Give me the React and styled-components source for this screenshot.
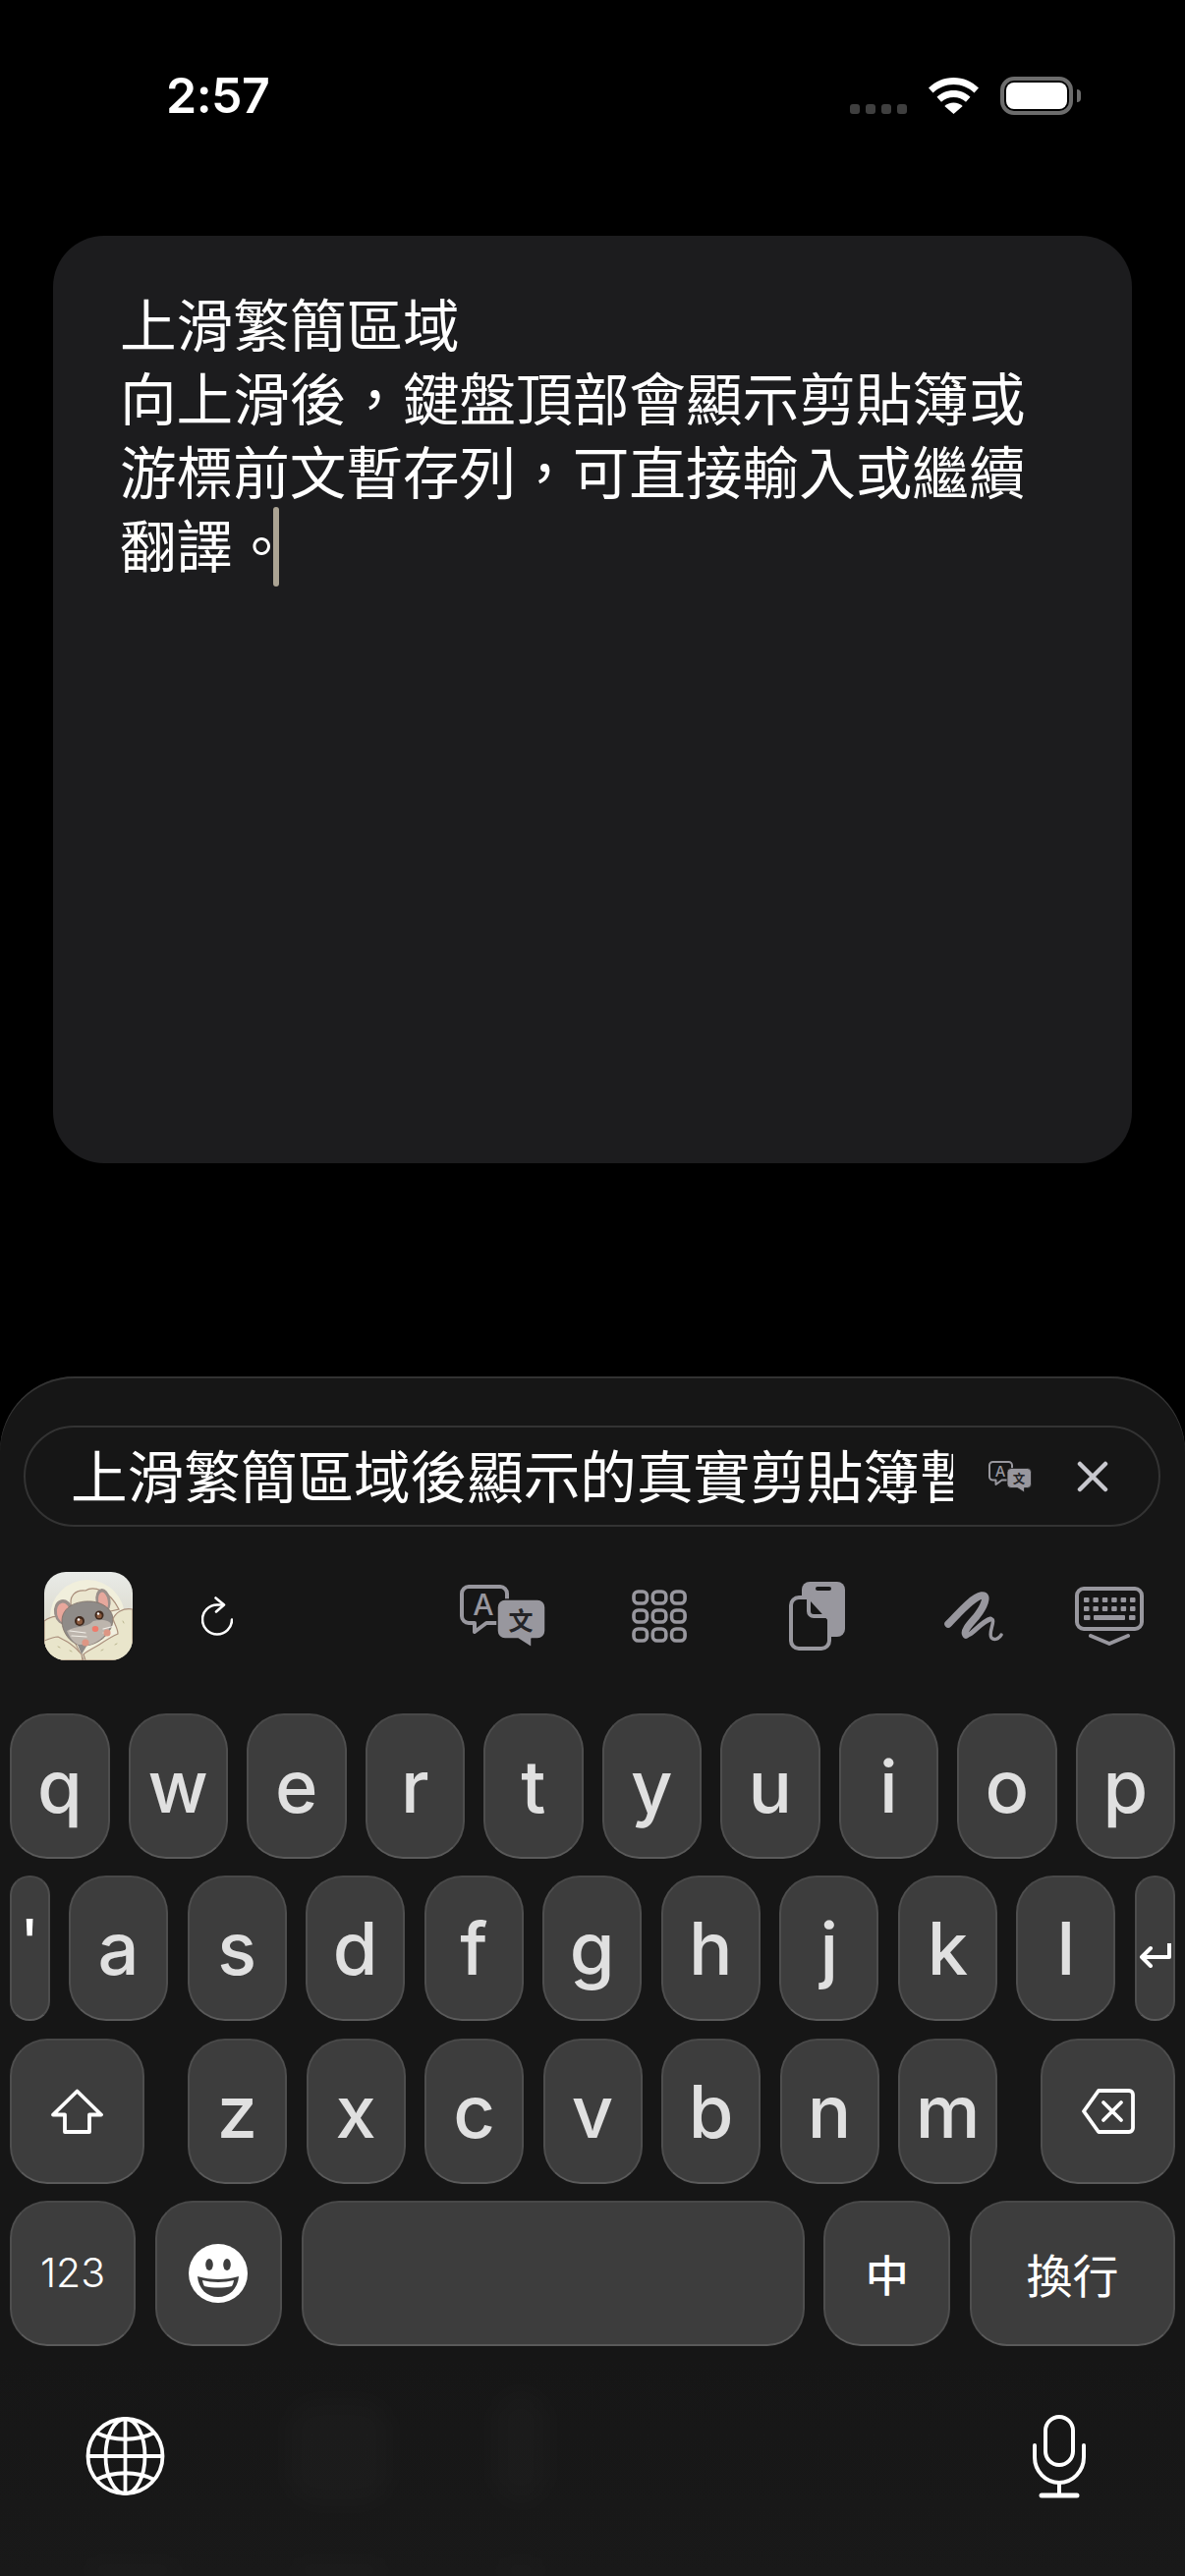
import React from "react";
import styled, { createGlobalStyle } from "styled-components";

const CJK = `"Noto Sans CJK TC", "Noto Sans CJK SC", sans-serif`;
const LATIN = `Inter, "Noto Sans CJK TC", sans-serif`;
const ICON = "#98979e";
const PANEL = "#161616";

const GlobalStyle = createGlobalStyle`
  html, body {
    margin: 0;
    padding: 0;
    background: #000;
  }
  * {
    box-sizing: border-box;
  }
`;

const Page = styled.div`
  width: 1206px;
  height: 2622px;
  background: #000;
  display: flex;
  flex-direction: column;
  overflow: hidden;
`;

const StatusBar = styled.div`
  height: 117px;
  padding: 78px 114px 0 169px;
  display: flex;
  justify-content: space-between;
  align-items: center;
`;

const Clock = styled.div`
  font-family: ${LATIN};
  font-weight: 600;
  font-size: 50px;
  line-height: 39px;
  letter-spacing: -0.5px;
  color: #fff;
`;

const StatusIcons = styled.div`
  display: flex;
  align-items: center;
  gap: 22px;
`;

const Dots = styled.div`
  display: flex;
  gap: 6px;
  align-self: flex-end;
  margin-bottom: 1px;
`;

const Dot = styled.span`
  width: 10px;
  height: 10px;
  border-radius: 3px;
  background: #3f3f3f;
`;

const Battery = styled.div`
  position: relative;
  width: 74px;
  height: 39px;
  border: 4px solid #6c6c6c;
  border-radius: 14px;
  padding: 2px;
  &::after {
    content: "";
    position: absolute;
    right: -12px;
    top: 9px;
    width: 4px;
    height: 13px;
    background: #6c6c6c;
    border-radius: 0 6px 6px 0;
  }
`;

const BatteryFill = styled.div`
  width: 100%;
  height: 100%;
  background: #fff;
  border-radius: 8px;
`;

const NoteCard = styled.div`
  margin: 123px 54px 0;
  height: 944px;
  padding: 51px 68px;
  background: #1c1c1e;
  border-radius: 52px;
  font-family: ${CJK};
  font-size: 57.6px;
  line-height: 75px;
  color: #fff;
`;

const Caret = styled.span`
  display: inline-block;
  width: 6px;
  height: 81px;
  margin: -14px 0 -2px -17px;
  vertical-align: middle;
  background: #aba393;
  border-radius: 3px;
`;

const KeyboardPanel = styled.div`
  position: relative;
  margin-top: 217px;
  flex: 1;
  background: linear-gradient(180deg, ${PANEL} 0%, ${PANEL} 82%, #191919 100%);
  border-radius: 76px 76px 0 0;
  box-shadow: inset 0 2px 0 #333;
  padding-top: 50px;
  overflow: hidden;
`;

const CandidatePill = styled.div`
  margin: 0 25px 0 24px;
  height: 103px;
  border: 2px solid #333;
  border-radius: 52px;
  display: flex;
  align-items: center;
  padding-left: 46px;
`;

const CandidateText = styled.div`
  width: 898px;
  margin-bottom: 5px;
  overflow: hidden;
  white-space: nowrap;
  font-family: ${CJK};
  font-size: 57.6px;
  line-height: 70px;
  color: #fff;
`;

const PillAction = styled.div`
  display: flex;
  align-items: center;
  margin-left: ${(p) => p.$gap}px;
`;

const Toolbar = styled.div`
  height: 190px;
  padding: 46px 0 54px 45px;
  display: flex;
  align-items: center;
`;

const ToolSlot = styled.div`
  display: flex;
  align-items: center;
  margin-left: ${(p) => p.$gap || 0}px;
`;

const AppIcon = styled.div`
  width: 90px;
  height: 90px;
  border-radius: 22px;
  overflow: hidden;
`;

const Keys = styled.div`
  padding: 0 10px;
  display: flex;
  flex-direction: column;
  gap: 17.3px;
`;

const KeyRow = styled.div`
  display: flex;
  justify-content: space-between;
`;

const KeyGroup = styled.div`
  display: flex;
  gap: 19.5px;
`;

const Key = styled.div`
  flex: none;
  width: ${(p) => p.$width}px;
  height: 148px;
  display: flex;
  align-items: center;
  justify-content: center;
  padding-top: ${(p) => p.$shift || 0}px;
  padding-bottom: ${(p) => p.$lift || 0}px;
  background: #3d3d3d;
  border: 2px solid #4e4e4e;
  border-top-color: #484848;
  border-bottom-color: #5a5a5a;
  border-radius: ${(p) => p.$radius || 38}px;
  font-family: ${(p) => (p.$cjk ? CJK : LATIN)};
  font-size: ${(p) => p.$size || 74}px;
  font-weight: ${(p) => p.$weight || 500};
  line-height: 1;
  color: ${(p) => p.$color || "#e0e0e0"};
`;

const SystemRow = styled.div`
  margin-top: 70px;
  padding: 0 100px 0 87px;
  display: flex;
  justify-content: space-between;
  align-items: center;
`;

const Ghost = styled.div`
  position: absolute;
  left: ${(p) => p.$left}px;
  top: ${(p) => p.$top}px;
  width: ${(p) => p.$w}px;
  height: ${(p) => p.$h}px;
  background: rgba(255, 255, 255, 0.018);
  border-radius: 30px;
  filter: blur(14px);
`;

const WifiIcon = () => (
  <svg width="51" height="37" viewBox="0 0 51 37">
    <path fill="#fff" d="M25.5 0C15.5 0 7 4 0 10.5l4.5 5C10.5 10 17.5 7 25.5 7s15 3 21 8.5l4.5-5C44 4 35.500 0 25.500 0z" />
    <path fill="#fff" d="M25.5 13c-6.800 0-12.500 2.500-17 6.800l4.500 5c3.300-3 7.500-4.800 12.500-4.800s9.200 1.800 12.500 4.800l4.500-5C38 15.500 32.300 13 25.500 13z" />
    <path fill="#fff" d="M25.500 25.500c-3.600 0-6.800 1.300-9.200 3.500l9.200 8 9.200-8c-2.400-2.200-5.600-3.500-9.200-3.500z" />
  </svg>
);

const RatIcon = () => (
  <svg width="90" height="90" viewBox="0 0 90 90">
    <defs>
      <linearGradient id="ratBg" x1="0" y1="0" x2="0" y2="1">
        <stop offset="0" stopColor="#e9ebe8" />
        <stop offset="1" stopColor="#d2cebb" />
      </linearGradient>
    </defs>
    <rect width="90" height="90" fill="url(#ratBg)" />
    <circle cx="44" cy="46" r="38" fill="#f1efdc" />
    <path d="M0 50C8 44 14 44 20 48L40 90H0Z" fill="#e9e5cb" stroke="#a98e7b" strokeWidth="1.100" />
    <path d="M28 38C24 24 32 18 42 19C50 14 66 18 76 38L50 44Z" fill="#ebe6cf" stroke="#a98e7b" strokeWidth="1.200" />
    <ellipse cx="20" cy="41" rx="10" ry="13" fill="#9a8f8a" transform="rotate(-12 20 41)" />
    <ellipse cx="20" cy="42" rx="7" ry="10.500" fill="#e8a79c" transform="rotate(-12 20 42)" />
    <ellipse cx="60" cy="29" rx="7.500" ry="12" fill="#9a8f8a" transform="rotate(-10 60 29)" />
    <ellipse cx="60" cy="30" rx="4.800" ry="9.500" fill="#e6a89d" transform="rotate(-10 60 30)" />
    <path d="M18 50C18 35 34 29 48 30C60 31 71 39 70 50C68 64 54 75 40 75C28 75 18 62 18 50Z" fill="#8f8b88" stroke="#7e6f66" strokeWidth="0.800" />
    <path d="M23 60C33 54 42 58 50 50C58 48 68 49 68 54C63 66 52 75 40 75C32 75 27 69 23 60Z" fill="#bdb5ad" />
    <circle cx="36" cy="50" r="5" fill="#3f281c" />
    <circle cx="36" cy="50.500" r="3" fill="#8a5a3e" />
    <circle cx="35" cy="48.500" r="1.300" fill="#fff" />
    <circle cx="56" cy="44" r="4.500" fill="#3f281c" />
    <circle cx="56" cy="44.500" r="2.600" fill="#8a5a3e" />
    <circle cx="55" cy="42.500" r="1.200" fill="#fff" />
    <ellipse cx="52" cy="58" rx="3.300" ry="2.900" fill="#ef7a6a" />
    <path d="M26 60L42 62M28 65L43 66M60 58L72 55M60 62L72 62" stroke="#f2efe8" strokeWidth="1.200" strokeLinecap="round" />
    <path d="M34 74L38 84L44 74Z" fill="#8f8b88" />
    <path d="M14 66C22 70 30 74 38 84L39 90H0V70C5 68 10 66 14 66Z" fill="#e9e5cb" stroke="#a98e7b" strokeWidth="1.100" />
    <path d="M90 38C80 36 72 42 70 48C72 54 75 58 75 63C68 66 62 70 56 74C50 78 44 80 40 84L42 90H90Z" fill="#e9e5cb" stroke="#a98e7b" strokeWidth="1.200" />
    <circle cx="42" cy="72" r="3.600" fill="#dd9684" />
    <circle cx="64" cy="62" r="3.600" fill="#dd9684" />
    <path d="M14 76l2 1M26 80l2 1M58 80l2-1M72 74l2-1M80 50l1 2" stroke="#b9b48f" strokeWidth="1" strokeLinecap="round" />
  </svg>
);

const RefreshIcon = () => (
  <svg width="32" height="40" viewBox="0 0 32 40" fill="none" stroke="#fff" strokeWidth="2.600" strokeLinecap="round" strokeLinejoin="round">
    <path d="M22 8.500H16A15 15 0 1 0 31 23.500" />
    <path d="M14.500 1.500L23 8.500L15 15.500" />
  </svg>
);

const TranslateIcon = ({ width = 88 }) => (
  <svg width={width} height={(width * 64) / 88} viewBox="0 0 88 64">
    <path
      d="M9 2H41a7 7 0 0 1 7 7V32a7 7 0 0 1-7 7H27L15 48V39H9a7 7 0 0 1-7-7V9a7 7 0 0 1 7-7Z"
      fill="none"
      stroke={ICON}
      strokeWidth="4"
      strokeLinejoin="round"
    />
    <text x="24" y="31" textAnchor="middle" fontFamily="Inter, sans-serif" fontSize="30" fontWeight="500" fill={ICON}>
      A
    </text>
    <path
      d="M46 15H79a8 8 0 0 1 8 8V47a8 8 0 0 1-8 8H73L73 64L59 55H46a8 8 0 0 1-8-8V23a8 8 0 0 1 8-8Z"
      fill={ICON}
      stroke={PANEL}
      strokeWidth="1.500"
      strokeLinejoin="round"
    />
    <text x="62" y="46" textAnchor="middle" fontFamily={CJK} fontSize="25" fontWeight="700" fill="#232326">
      文
    </text>
  </svg>
);

const CloseIcon = () => (
  <svg width="32" height="32" viewBox="0 0 32 32" stroke="#c8c8ce" strokeWidth="4.500" strokeLinecap="round">
    <path d="M3 3L29 29M29 3L3 29" />
  </svg>
);

const GridIcon = () => (
  <svg width="56" height="54" viewBox="0 0 56 54" fill="none" stroke={ICON} strokeWidth="3.600">
    {[0, 1, 2].map((r) =>
      [0, 1, 2].map((c) => (
        <rect key={`${r}-${c}`} x={2 + c * 19.3} y={2 + r * 19} width="13.500" height="12" rx="4.500" />
      ))
    )}
  </svg>
);

const ClipboardIcon = () => (
  <svg width="57" height="70" viewBox="0 0 57 70">
    <rect x="13" y="0" width="44" height="56" rx="8" fill={ICON} />
    <rect x="27" y="5" width="16" height="4" rx="2" fill={PANEL} />
    <path
      d="M10 16H21L41 38V60a8 8 0 0 1-8 8H10a8 8 0 0 1-8-8V24a8 8 0 0 1 8-8Z"
      fill={PANEL}
      stroke={ICON}
      strokeWidth="4"
      strokeLinejoin="round"
    />
    <path d="M20 16V30a5 5 0 0 0 5 5H41" fill="none" stroke={ICON} strokeWidth="4" />
  </svg>
);

const ScribbleIcon = () => (
  <svg width="60" height="54" viewBox="0 0 60 54" fill="none" stroke={ICON} strokeLinecap="round" strokeLinejoin="round">
    <path strokeWidth="7.500" d="M4 35C15 24 28 8 38 6C46 5 40 18 33 27C27 34 19 42 22 46" />
    <path strokeWidth="5" d="M22 46C26 49 38 32 47 30" />
    <path strokeWidth="3.500" d="M47 30C54 29 44 44 48 49C51 52 56 50 58 46" />
  </svg>
);

const KeyboardIcon = () => (
  <svg width="70" height="60" viewBox="0 0 70 60" fill="none">
    <rect x="2" y="2" width="66" height="41" rx="7" stroke={ICON} strokeWidth="4" />
    {[0, 1].map((r) =>
      [0, 1, 2, 3, 4, 5].map((c) => (
        <rect key={`${r}-${c}`} x={9 + c * 9.400} y={11 + r * 9} width="5.500" height="5" rx="1" fill={ICON} />
      ))
    )}
    <rect x="9" y="29" width="6.500" height="5" rx="1" fill={ICON} />
    <rect x="19" y="29" width="32" height="5" rx="1" fill={ICON} />
    <rect x="55" y="29" width="6.500" height="5" rx="1" fill={ICON} />
    <path d="M16 50L35 58L54 50" stroke={ICON} strokeWidth="4" strokeLinecap="round" strokeLinejoin="round" />
  </svg>
);

const ReturnIcon = () => (
  <svg width="33" height="26" viewBox="0 0 33 26" fill="none" stroke="#fff" strokeWidth="4" strokeLinejoin="round">
    <path d="M31 1V15H3" />
    <path d="M12 6L3 15L12 24" strokeLinecap="round" />
  </svg>
);

const ShiftIcon = () => (
  <svg width="53" height="46" viewBox="0 0 53 46" fill="none" stroke="#fff" strokeWidth="3.800" strokeLinejoin="round">
    <path d="M26.500 2.500L51 26.500H39V44H14V26.500H2Z" />
  </svg>
);

const DeleteIcon = () => (
  <svg width="54" height="46" viewBox="0 0 54 46" fill="none" stroke="#fff" strokeWidth="3.800" strokeLinejoin="round" strokeLinecap="round">
    <path d="M17 2H48a4 4 0 0 1 4 4V40a4 4 0 0 1-4 4H17L2 23Z" />
    <path d="M22 14L40 32M40 14L22 32" />
  </svg>
);

const EmojiIcon = () => (
  <svg width="60" height="60" viewBox="0 0 60 60">
    <circle cx="30" cy="30" r="30" fill="#fff" />
    <ellipse cx="21" cy="21" rx="3.800" ry="6" fill="#3d3d3d" />
    <ellipse cx="39" cy="21" rx="3.800" ry="6" fill="#3d3d3d" />
    <path d="M9 33C22 37 38 37 51 33C50 46 41 54 30 54C19 54 10 46 9 33Z" fill="#3d3d3d" />
    <path d="M14 37C24 39.500 36 39.500 46 37C45.500 40 45 41.500 44 43C35 45 25 45 16 43C15 41.500 14.500 40 14 37Z" fill="#fff" />
  </svg>
);

const GlobeIcon = () => (
  <svg width="81" height="80" viewBox="0 0 81 80" fill="none" stroke="#fff" strokeWidth="3.800">
    <circle cx="40.500" cy="40" r="38" />
    <ellipse cx="40.500" cy="40" rx="20" ry="38" />
    <path d="M40.500 2V78M2 40H79" />
    <path d="M11 16C28 25 53 25 70 16" />
    <path d="M11 64C28 55 53 55 70 64" />
  </svg>
);

const MicIcon = () => (
  <svg width="56" height="85" viewBox="0 0 56 85" fill="none" stroke="#fff" strokeWidth="4">
    <rect x="14" y="2" width="28" height="49" rx="14" />
    <path d="M3 31V43a25 26 0 0 0 50 0V31" strokeLinecap="round" />
    <path d="M28 69V82" />
    <path d="M10 82H46" strokeWidth="5" strokeLinecap="round" />
  </svg>
);

const row1 = ["q", "w", "e", "r", "t", "y", "u", "i", "o", "p"];
const row2 = ["a", "s", "d", "f", "g", "h", "j", "k", "l"];
const row3 = ["z", "x", "c", "v", "b", "n", "m"];

export default function App() {
  return (
    <Page>
      <GlobalStyle />
      <StatusBar>
        <Clock>2:57</Clock>
        <StatusIcons>
          <Dots>
            <Dot />
            <Dot />
            <Dot />
            <Dot />
          </Dots>
          <WifiIcon />
          <Battery>
            <BatteryFill />
          </Battery>
        </StatusIcons>
      </StatusBar>

      <NoteCard lang="zh-Hant">
        上滑繁簡區域
        <br />
        向上滑後，鍵盤頂部會顯示剪貼簿或游標前文暫存列，可直接輸入或繼續翻譯。
        <Caret />
      </NoteCard>

      <KeyboardPanel>
        <Ghost $left={290} $top={1040} $w={110} $h={110} />
        <Ghost $left={500} $top={1030} $w={60} $h={120} />
        <Ghost $left={80} $top={1205} $w={110} $h={20} />
        <Ghost $left={290} $top={1205} $w={110} $h={20} />
        <Ghost $left={500} $top={1205} $w={60} $h={20} />

        <CandidatePill>
          <CandidateText lang="zh-Hant">上滑繁簡區域後顯示的真實剪貼簿暫</CandidateText>
          <PillAction $gap={36}>
            <TranslateIcon width={44} />
          </PillAction>
          <PillAction $gap={46}>
            <CloseIcon />
          </PillAction>
        </CandidatePill>

        <Toolbar>
          <AppIcon>
            <RatIcon />
          </AppIcon>
          <ToolSlot $gap={70}>
            <RefreshIcon />
          </ToolSlot>
          <ToolSlot $gap={231}>
            <TranslateIcon />
          </ToolSlot>
          <ToolSlot $gap={87}>
            <GridIcon />
          </ToolSlot>
          <ToolSlot $gap={104}>
            <ClipboardIcon />
          </ToolSlot>
          <ToolSlot $gap={101}>
            <ScribbleIcon />
          </ToolSlot>
          <ToolSlot $gap={73}>
            <KeyboardIcon />
          </ToolSlot>
        </Toolbar>

        <Keys>
          <KeyRow>
            {row1.map((k) => (
              <Key key={k} $width={101.5}>
                {k}
              </Key>
            ))}
          </KeyRow>
          <KeyRow>
            <Key $width={40.5} $radius={20} $size={60} $lift={16} $color="#fff">
              '
            </Key>
            {row2.map((k) => (
              <Key key={k} $width={101}>
                {k}
              </Key>
            ))}
            <Key $width={41} $radius={20} $shift={14}>
              <ReturnIcon />
            </Key>
          </KeyRow>
          <KeyRow>
            <Key $width={137}>
              <ShiftIcon />
            </Key>
            <KeyGroup>
              {row3.map((k) => (
                <Key key={k} $width={101}>
                  {k}
                </Key>
              ))}
            </KeyGroup>
            <Key $width={137}>
              <DeleteIcon />
            </Key>
          </KeyRow>
          <KeyRow>
            <Key $width={128} $size={41} $weight={300} $color="#fff">
              123
            </Key>
            <Key $width={129}>
              <EmojiIcon />
            </Key>
            <Key $width={512} />
            <Key $width={129} $cjk $size={44} $color="#fff">
              中
            </Key>
            <Key $width={209} $cjk $size={47} $weight={400} $color="#fff">
              換行
            </Key>
          </KeyRow>
        </Keys>

        <SystemRow>
          <GlobeIcon />
          <MicIcon />
        </SystemRow>
      </KeyboardPanel>
    </Page>
  );
}
